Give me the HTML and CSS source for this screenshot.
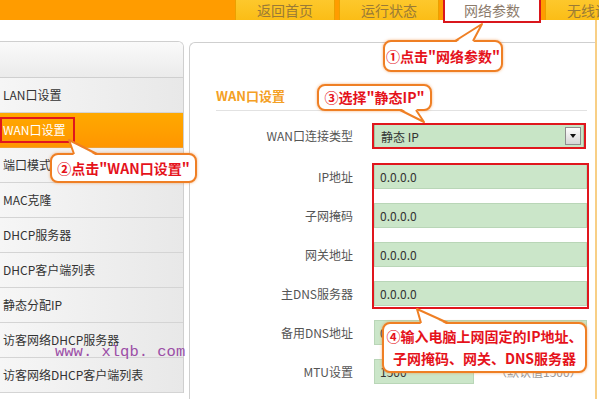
FILE: index.html
```html
<!DOCTYPE html>
<html lang="zh-CN">
<head>
<meta charset="utf-8">
<title>WAN口设置</title>
<link rel="stylesheet" href="styles.css">
</head>
<body>
<header class="nav">
  <div class="tab">返回首页</div>
  <div class="tab">运行状态</div>
  <div class="tab active">网络参数</div>
  <div class="tab">无线设置</div>
</header>
<div class="main">
  <aside class="menu">
    <div class="menu-head"></div>
    <div class="item">LAN口设置</div>
    <div class="item sel">WAN口设置</div>
    <div class="item">端口模式</div>
    <div class="item">MAC克隆</div>
    <div class="item">DHCP服务器</div>
    <div class="item">DHCP客户端列表</div>
    <div class="item">静态分配IP</div>
    <div class="item">访客网络DHCP服务器</div>
    <div class="item">访客网络DHCP客户端列表</div>
  </aside>
  <section class="panel">
    <h2 class="title">WAN口设置</h2>
    <div class="form">
      <div class="lab first">WAN口连接类型</div>
      <div class="select"><span>静态 IP</span><span class="arrow"></span></div>
      <div class="lab">IP地址</div>
      <div class="input">0.0.0.0</div>
      <div class="lab">子网掩码</div>
      <div class="input">0.0.0.0</div>
      <div class="lab">网关地址</div>
      <div class="input">0.0.0.0</div>
      <div class="lab">主DNS服务器</div>
      <div class="input">0.0.0.0</div>
      <div class="lab">备用DNS地址</div>
      <div class="input">0.0.0.0</div>
      <div class="lab">MTU设置</div>
      <div class="mtu"><div class="input short">1500</div><span class="note">（默认值1500）</span></div>
    </div>
  </section>
</div>

<div class="wm">www. xlqb. com</div>

<div class="hl hl-menu"></div>
<div class="hl hl-select"></div>
<div class="hl hl-inputs"></div>

<div class="callout c1">①点击"网络参数"</div>
<div class="callout c2">②点击"WAN口设置"</div>
<div class="callout c3">③选择"静态IP"</div>
<div class="callout c4">④输入电脑上网固定的IP地址、<br>子网掩码、网关、DNS服务器</div>

<svg class="tails" width="599" height="399" viewBox="0 0 599 399">
  <g class="tail">
    <polygon class="fill" points="455,43 482,24 473,43"/>
    <polyline class="line" points="455,41 482,24 473,41"/>
  </g>
  <g class="tail">
    <polygon class="fill" points="400,108 424,122 416,108"/>
    <polyline class="line" points="400,110 424,122 416,110"/>
  </g>
  <g class="tail">
    <polygon class="fill" points="74,156 69,140 97,156"/>
    <polyline class="line" points="74,154 69,140 97,154"/>
  </g>
  <g class="tail">
    <polygon class="fill" points="421,325 417,309 448,325"/>
    <polyline class="line" points="421,323 417,309 448,323"/>
  </g>
</svg>
</body>
</html>
```

FILE: styles.css
```css
* { box-sizing: border-box; margin: 0; padding: 0; }
html, body { width: 599px; height: 399px; overflow: hidden; background: #fff; }
body {
  font-family: "Noto Sans CJK SC", "Liberation Sans", sans-serif;
  font-size: 12px;
  color: #333;
  position: relative;
}

/* top navigation */
.nav {
  height: 20px;
  background: #ff9c00;
  display: flex;
  align-items: flex-start;
  gap: 4px;
  padding-left: 235px;
  position: relative;
  z-index: 2;
}
.tab {
  flex: none;
  width: 100px;
  height: 20px;
  background: linear-gradient(#fdc82c, #fbbd16);
  border-left: 1px solid #eba000;
  border-right: 1px solid #eba000;
  color: #9a7a36;
  font-size: 14px;
  line-height: 20px;
  text-align: center;
  white-space: nowrap;
  overflow: hidden;
}
.tab.active {
  width: 98px;
  height: 23px;
  background: #fff;
  border: 2px solid #d9161c;
  border-top: none;
  color: #8c7b6c;
}

/* main area */
.main {
  display: flex;
  width: 597px;
  height: 379px;
  border-right: 2px solid #f8cf86;
  padding-top: 21px;
}
.menu {
  flex: none;
  width: 184px;
  align-self: flex-start;
  border-top: 1px solid #cfcfcf;
  border-right: 1px solid #cfcfcf;
  border-top-right-radius: 6px;
  overflow: hidden;
}
.menu-head {
  height: 36px;
  background: linear-gradient(#fafafa, #ebebeb);
  border-bottom: 1px solid #cfcfcf;
}
.item {
  height: 35px;
  border-bottom: 1px solid #d4d4d4;
  background: linear-gradient(to right, #f6f6f6, #e8e8e8);
  padding-left: 3px;
  line-height: 34px;
  white-space: nowrap;
  color: #333;
}
.item.sel {
  background: linear-gradient(#ffa900, #ff9600);
  color: #fff;
  border-bottom-color: #f0a030;
}

.panel {
  flex: 1;
  margin-left: 5px;
  margin-top: 1px;
  border-top: 1px solid #cfcfcf;
  border-left: 1px solid #cfcfcf;
  border-top-left-radius: 6px;
  padding: 43px 8px 0 26px;
}
.title {
  font-size: 13px;
  font-weight: bold;
  color: #f4a024;
  line-height: 20px;
  padding-bottom: 4px;
  border-bottom: 1px solid #e2e2e2;
}
.form {
  display: grid;
  grid-template-columns: 137px 1fr;
  grid-template-rows: 26px repeat(6, 25px);
  column-gap: 21px;
  row-gap: 14px;
  margin-top: 13px;
}
.lab {
  text-align: right;
  color: #555;
  line-height: 25px;
  white-space: nowrap;
}
.lab.first { line-height: 24px; }
.select {
  width: 210px;
  height: 24px;
  background: #c8e5c6;
  border: 1px solid #a3c4a1;
  display: flex;
  align-items: center;
  justify-content: space-between;
  padding: 0 2px 0 6px;
  color: #333;
}
.arrow {
  width: 16px;
  height: 18px;
  border: 1px solid #8d8d8d;
  background: linear-gradient(#fdfdfd, #d6d6d6);
  display: flex;
  align-items: center;
  justify-content: center;
}
.arrow::after {
  content: "";
  border-top: 4px solid #111;
  border-left: 3.5px solid transparent;
  border-right: 3.5px solid transparent;
}
.input {
  height: 25px;
  background: #cbe6c9;
  border: 1px solid #b9d6b7;
  padding-left: 5px;
  line-height: 23px;
  color: #333;
}
.mtu { display: flex; align-items: center; gap: 21px; }
.input.short { width: 100px; }
.note { color: #999; white-space: nowrap; }

/* overlays: annotations */
.wm {
  position: absolute;
  left: 55px;
  top: 342px;
  font-family: "Liberation Mono", monospace;
  font-size: 15.5px;
  line-height: 20px;
  color: #9b4ea6;
  white-space: nowrap;
}
.hl { position: absolute; border: 2px solid #e0161d; }
.hl-menu { left: 0; top: 117px; width: 75px; height: 26px; }
.hl-select { left: 372px; top: 123px; width: 214px; height: 26px; }
.hl-inputs { left: 372px; top: 163px; width: 217px; height: 146px; }

.callout {
  position: absolute;
  background: #fff;
  border: 2px solid #ef7f24;
  border-radius: 8px;
  box-shadow: 0 0 3px rgba(239, 127, 36, 0.6);
  color: #e5121b;
  font-weight: bold;
  font-size: 14px;
  text-align: center;
  white-space: nowrap;
}
.c1 { left: 383px; top: 40px; width: 120px; height: 32px; line-height: 28px; }
.c2 { left: 50px; top: 153px; width: 147px; height: 30px; line-height: 26px; }
.c3 { left: 317px; top: 84px; width: 115px; height: 27px; line-height: 23px; }
.c4 { left: 382px; top: 322px; width: 205px; height: 51px; line-height: 22px; padding-top: 1px; }

.tails { position: absolute; left: 0; top: 0; pointer-events: none; }
.tail .fill { fill: #fff; }
.tail .line { fill: none; stroke: #ef7f24; stroke-width: 2; stroke-linejoin: round; }
```
